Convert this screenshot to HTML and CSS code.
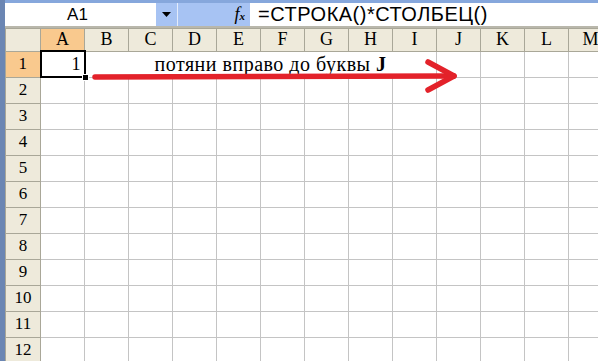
FILE: index.html
```html
<!DOCTYPE html>
<html lang="ru">
<head>
    <meta charset="UTF-8">
    <title>Excel</title>
    <link rel="stylesheet" href="styles.css">
</head>
<body>
    <div class="app">
        <div class="formula-bar">
            <div class="name-box">A1</div>
            <div class="name-drop">
                <svg width="9" height="5" viewBox="0 0 9 5"><polygon points="0,0 9,0 4.5,5" fill="#000"/></svg>
            </div>
            <div class="fx-box"><span class="fx">f<small>x</small></span></div>
            <div class="formula">=СТРОКА()*СТОЛБЕЦ()</div>
        </div>

        <table class="grid">
            <colgroup>
                <col class="col-head">
                <col><col><col><col><col><col><col><col><col><col><col><col><col>
            </colgroup>
            <thead>
                <tr>
                    <th class="corner"></th>
                    <th class="active">A</th><th>B</th><th>C</th><th>D</th><th>E</th><th>F</th>
                    <th>G</th><th>H</th><th>I</th><th>J</th><th>K</th><th>L</th><th>M</th>
                </tr>
            </thead>
            <tbody>
                <tr>
                    <th class="active">1</th>
                    <td class="selected num">1<span class="fill-handle"></span></td>
                    <td colspan="8" class="note">потяни вправо до буквы <b>J</b></td>
                    <td></td><td></td><td></td><td></td>
                </tr>
                <tr><th>2</th><td></td><td></td><td></td><td></td><td></td><td></td><td></td><td></td><td></td><td></td><td></td><td></td><td></td></tr>
                <tr><th>3</th><td></td><td></td><td></td><td></td><td></td><td></td><td></td><td></td><td></td><td></td><td></td><td></td><td></td></tr>
                <tr><th>4</th><td></td><td></td><td></td><td></td><td></td><td></td><td></td><td></td><td></td><td></td><td></td><td></td><td></td></tr>
                <tr><th>5</th><td></td><td></td><td></td><td></td><td></td><td></td><td></td><td></td><td></td><td></td><td></td><td></td><td></td></tr>
                <tr><th>6</th><td></td><td></td><td></td><td></td><td></td><td></td><td></td><td></td><td></td><td></td><td></td><td></td><td></td></tr>
                <tr><th>7</th><td></td><td></td><td></td><td></td><td></td><td></td><td></td><td></td><td></td><td></td><td></td><td></td><td></td></tr>
                <tr><th>8</th><td></td><td></td><td></td><td></td><td></td><td></td><td></td><td></td><td></td><td></td><td></td><td></td><td></td></tr>
                <tr><th>9</th><td></td><td></td><td></td><td></td><td></td><td></td><td></td><td></td><td></td><td></td><td></td><td></td><td></td></tr>
                <tr><th>10</th><td></td><td></td><td></td><td></td><td></td><td></td><td></td><td></td><td></td><td></td><td></td><td></td><td></td></tr>
                <tr><th>11</th><td></td><td></td><td></td><td></td><td></td><td></td><td></td><td></td><td></td><td></td><td></td><td></td><td></td></tr>
                <tr><th>12</th><td></td><td></td><td></td><td></td><td></td><td></td><td></td><td></td><td></td><td></td><td></td><td></td><td></td></tr>
            </tbody>
        </table>

        <!-- red arrow drawn over the sheet -->
        <svg class="arrow" width="598" height="361" viewBox="0 0 598 361">
            <g stroke="#e3222a" stroke-width="5.5" stroke-linecap="round" fill="none">
                <line x1="95" y1="77" x2="452" y2="76"/>
                <line x1="428" y1="62" x2="454" y2="76"/>
                <line x1="428" y1="90" x2="454" y2="76"/>
            </g>
        </svg>
    </div>
</body>
</html>
```

FILE: styles.css
```css
/* Global */
* {
    margin: 0;
    padding: 0;
    box-sizing: border-box;
}

body {
    width: 598px;
    height: 361px;
    overflow: hidden;
    background: #fff;
}

.app {
    position: relative;
    height: 361px;
    border-left: 5px solid #6b86b3;
    overflow: hidden;
}

/* Formula bar */
.formula-bar {
    display: flex;
    height: 28px;
    border-top: 3px solid #86a7dc;
    border-bottom: 2px solid #b9b7ab;
    font-family: 'Liberation Sans', Arial, sans-serif;
    font-size: 17px;
}

.name-box {
    width: 151px;
    background: #fff;
    display: flex;
    align-items: center;
    justify-content: center;
    padding-right: 6px;
}

.name-drop {
    width: 22px;
    background: #a7c3f3;
    display: flex;
    align-items: center;
    justify-content: center;
    border-right: 1px solid #e4ecfb;
}

.fx-box {
    width: 72px;
    background: #a7c3f3;
    display: flex;
    align-items: center;
    justify-content: flex-end;
    padding-right: 5px;
}

.fx {
    font-family: 'Liberation Serif', serif;
    font-style: italic;
    font-size: 18px;
}

.fx small {
    font-size: 11px;
    font-weight: bold;
}

.formula {
    flex: 1;
    background: #fff;
    display: flex;
    align-items: center;
    padding-left: 8px;
    font-size: 20px;
    letter-spacing: 0.5px;
    white-space: nowrap;
}

/* Sheet grid */
.grid {
    border-collapse: collapse;
    table-layout: fixed;
    width: 607px;
    font-family: 'Liberation Serif', 'Times New Roman', serif;
    font-size: 17px;
}

.grid col {
    width: 44px;
}

.grid col.col-head {
    width: 35px;
}

.grid th {
    background: #eeeadb;
    border: 1px solid #a9a798;
    font-weight: normal;
    text-align: center;
    color: #000;
}

.grid thead th {
    height: 22px;
    font-size: 18px;
}

.grid tbody tr {
    height: 26px;
}

.grid th.active {
    background: #f9c98e;
}

.grid td {
    border: 1px solid #c4c4c4;
    padding: 0 3px;
    white-space: nowrap;
}

.grid td.selected {
    position: relative;
    border: 2px solid #000;
    font-size: 18px;
}

.grid td.num {
    text-align: right;
}

.grid td.note {
    padding-left: 69px;
    font-size: 20px;
    letter-spacing: 0.5px;
}

.fill-handle {
    position: absolute;
    right: -5px;
    bottom: -5px;
    width: 7px;
    height: 7px;
    background: #000;
    border: 1px solid #fff;
}

.arrow {
    position: absolute;
    left: -5px;
    top: 0;
    pointer-events: none;
}
```
